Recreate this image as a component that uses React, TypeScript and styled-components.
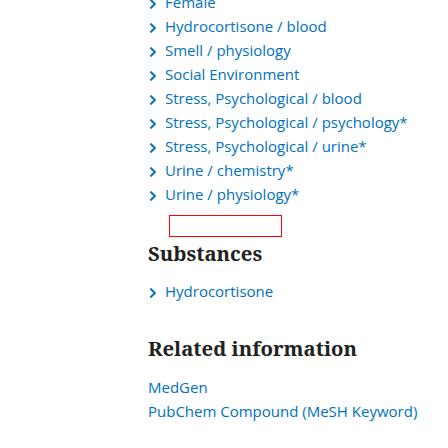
import React from "react";
import styled, { createGlobalStyle } from "styled-components";

const Global = createGlobalStyle`
  html, body { margin: 0; padding: 0; background: #fff; }
  body { font-family: "Open Sans", "Noto Sans", sans-serif; overflow: hidden; }
`;

const Page = styled.div`
  padding-left: 148px;
  width: 300px;
`;

const TermList = styled.ul<{ $top?: number }>`
  list-style: none;
  margin: ${(p) => p.$top ?? 0}px 0 0 0;
  padding: 0;
`;

const TermItem = styled.li`
  display: flex;
  align-items: center;
  height: 24px;
  font-size: 15px;
  line-height: 24px;
`;

const Chevron = styled.svg`
  flex: none;
  width: 17px;
  height: 10px;
  margin-top: 3px;
`;

const TermLink = styled.a`
  color: #0071bc;
  text-decoration: none;
  white-space: nowrap;
`;

const EmptyBox = styled.div`
  margin: 9px 0 0 21px;
  width: 111px;
  height: 20px;
  border: 1px solid #ff0000;
`;

const Heading = styled.h2<{ $top: number }>`
  margin: ${(p) => p.$top}px 0 0 0;
  font-family: "Noto Serif", "DejaVu Serif", serif;
  font-weight: bold;
  font-size: 20.3px;
  line-height: 26px;
  color: #212121;
`;

const LinkList = styled.ul`
  list-style: none;
  margin: 14px 0 0 0;
  padding: 0;
`;

const LinkItem = styled.li`
  font-size: 15px;
  line-height: 24px;
  height: 24px;
`;

const ChevronIcon = () => (
  <Chevron viewBox="0 0 17 10">
    <path d="M2.4 0.6 L6.8 5 L2.4 9.4" fill="none" stroke="#0071bc" strokeWidth="2" />
  </Chevron>
);

const terms = [
  "Female",
  "Hydrocortisone / blood",
  "Smell / physiology",
  "Social Environment",
  "Stress, Psychological / blood",
  "Stress, Psychological / psychology*",
  "Stress, Psychological / urine*",
  "Urine / chemistry*",
  "Urine / physiology*",
];

export default function App() {
  return (
    <Page>
      <Global />
      <TermList $top={-10}>
        {terms.map((t) => (
          <TermItem key={t}>
            <ChevronIcon />
            <TermLink href="#">{t}</TermLink>
          </TermItem>
        ))}
      </TermList>
      <EmptyBox />
      <section>
        <Heading $top={3}>Substances</Heading>
        <TermList $top={13}>
          <TermItem>
            <ChevronIcon />
            <TermLink href="#">Hydrocortisone</TermLink>
          </TermItem>
        </TermList>
      </section>
      <section>
        <Heading $top={32}>Related information</Heading>
        <LinkList>
          <LinkItem>
            <TermLink href="#">MedGen</TermLink>
          </LinkItem>
          <LinkItem>
            <TermLink href="#">PubChem Compound (MeSH Keyword)</TermLink>
          </LinkItem>
        </LinkList>
      </section>
    </Page>
  );
}
